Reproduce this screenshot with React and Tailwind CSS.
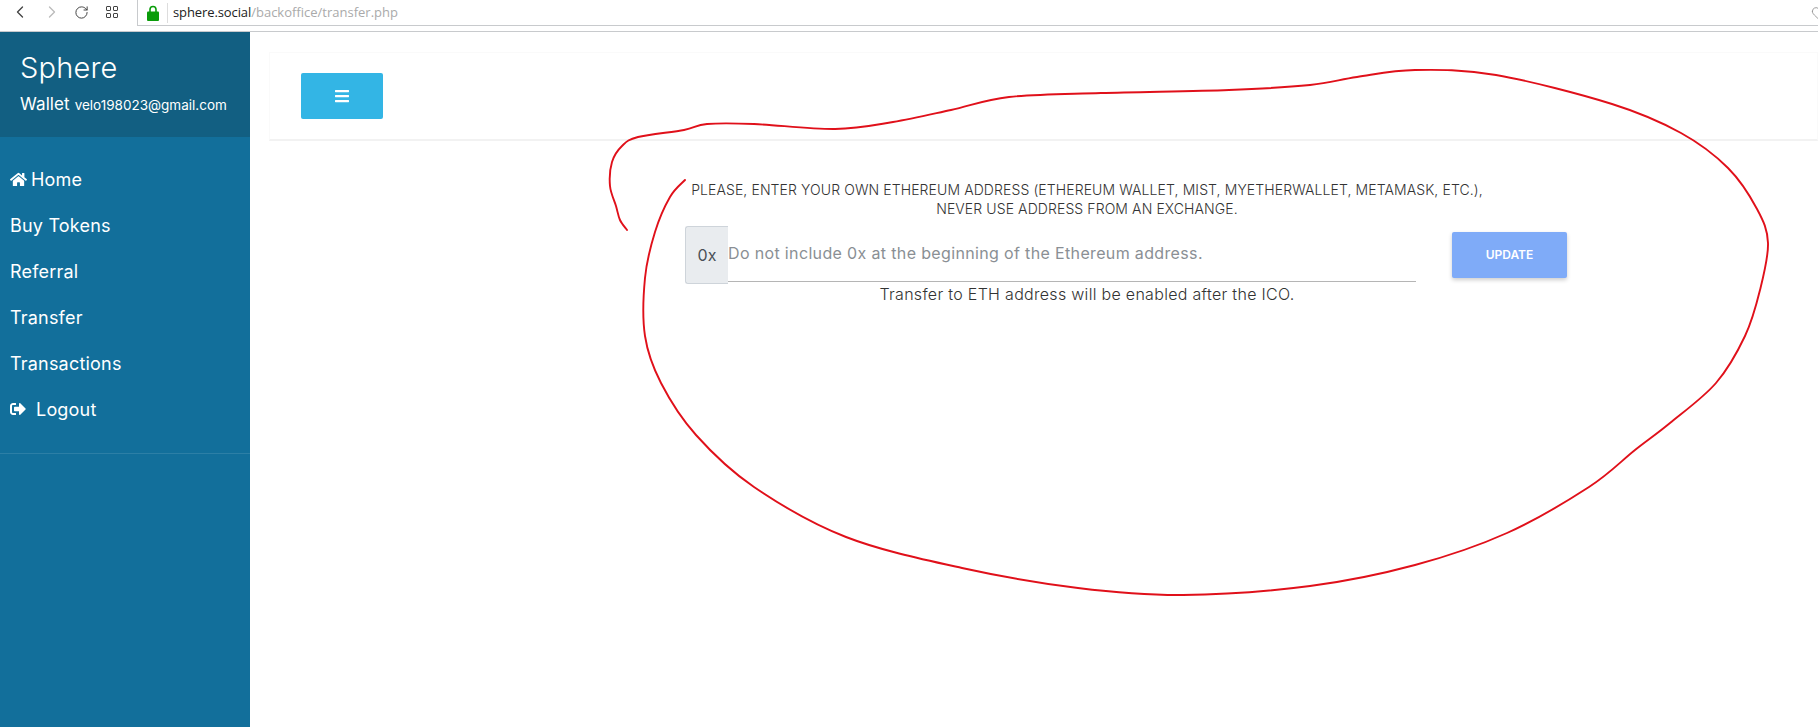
import { ChevronLeft, ChevronRight, RotateCw, Heart } from 'lucide-react'
import { FaHome, FaSignOutAlt, FaBars } from 'react-icons/fa'

const scribble = [
  [627, 230], [620, 220], [616, 206], [610, 186], [612, 162], [622, 146], [638, 137], [684, 130], [707, 124],
  [754, 124], [835, 129], [893, 122], [951, 110], [1009, 97], [1101, 93], [1229, 90], [1310, 85], [1357, 77],
  [1415, 70], [1496, 75], [1612, 104], [1681, 133], [1728, 168], [1757, 209], [1768, 243], [1760, 290], [1745, 336],
  [1716, 383], [1670, 423], [1635, 450], [1589, 487], [1507, 533], [1415, 565], [1310, 586], [1183, 595], [1078, 588],
  [962, 568], [846, 537], [754, 487], [696, 435], [661, 383], [645, 336], [645, 278], [655, 232], [670, 197], [685, 180],
]

// catmull-rom through the hand-drawn points
const toPath = (pts) => {
  let d = `M${pts[0][0]} ${pts[0][1]}`
  for (let i = 0; i < pts.length - 1; i++) {
    const p0 = pts[i - 1] || pts[i]
    const p1 = pts[i]
    const p2 = pts[i + 1]
    const p3 = pts[i + 2] || p2
    d += ` C${p1[0] + (p2[0] - p0[0]) / 6} ${p1[1] + (p2[1] - p0[1]) / 6} ${p2[0] - (p3[0] - p1[0]) / 6} ${p2[1] - (p3[1] - p1[1]) / 6} ${p2[0]} ${p2[1]}`
  }
  return d
}

const navItems = ['Buy Tokens', 'Referral', 'Transfer', 'Transactions']

export default function App() {
  return (
    <div className="relative w-[1818px] h-[727px] overflow-hidden bg-white font-['Inter',sans-serif]">
      {/* Browser bar */}
      <div className="flex h-[32px] border-b border-[#c8cacd] bg-white">
        <div className="flex w-[137px] items-start pl-[10px] pt-[2px]">
          <ChevronLeft size={20} strokeWidth={1.6} className="text-[#444]" />
          <ChevronRight size={20} strokeWidth={1.6} className="ml-[12px] text-[#bbb]" />
          <RotateCw size={15} strokeWidth={1.6} className="ml-[12px] mt-[3px] text-[#444]" />
          <div className="ml-[17px] mt-[4px] grid grid-cols-2 gap-[2px]">
            <span className="h-[5px] w-[5px] rounded-[1px] border border-[#444]" />
            <span className="h-[5px] w-[5px] rounded-[1px] border border-[#444]" />
            <span className="h-[5px] w-[5px] rounded-[1px] border border-[#444]" />
            <span className="h-[5px] w-[5px] rounded-[1px] border border-[#444]" />
          </div>
        </div>
        <div className="flex h-[26px] flex-1 items-center border-b border-l border-[#c8cacd] pl-[9px]">
          <svg width="12" height="16" viewBox="0 0 12 16" fill="none">
            <path d="M3 7V4.5a3 3 0 0 1 6 0V7" stroke="#0a9c0a" strokeWidth="1.6" />
            <rect x="0" y="6.5" width="12" height="9.5" rx="1" fill="#0a9c0a" />
          </svg>
          <span className="ml-[8px] h-[20px] border-l border-[#ddd]" />
          <span className="ml-[5px] font-['Open_Sans',sans-serif] text-[13px] tracking-[-0.1px] text-[#222]">sphere.social</span>
          <span className="font-['Open_Sans',sans-serif] text-[13px] text-[#aaa]">/backoffice/transfer.php</span>
          <Heart size={16} strokeWidth={1.2} className="ml-auto mr-[-9px] text-[#888]" />
        </div>
      </div>

      <div className="flex h-[695px]">
        {/* Sidebar */}
        <aside className="w-[250px] shrink-0 bg-[#126f9b] text-white">
          <div className="h-[105px] bg-[#125f82] pl-[20px] pt-[17px]">
            <div className="text-[29px] font-light leading-[38px] tracking-[0.2px]">Sphere</div>
            <div className="mt-[7px] whitespace-nowrap text-[17px] leading-[20px] tracking-[0.1px]">
              Wallet <span className="text-[13.5px] tracking-normal">velo198023@gmail.com</span>
            </div>
          </div>
          <nav className="border-b border-[#2c7fa6] pb-[21px] pl-[10px] pt-[19px] text-[18px] tracking-[0.2px]">
            <a className="flex h-[46px] items-center gap-[4px]">
              <FaHome size={17} /> Home
            </a>
            {navItems.map(item => (
              <a key={item} className="flex h-[46px] items-center">{item}</a>
            ))}
            <a className="flex h-[46px] items-center gap-[10px]">
              <FaSignOutAlt size={16} /> Logout
            </a>
          </nav>
        </aside>

        {/* Main */}
        <main className="flex-1 pl-[19px] pt-[20px]">
          <div className="flex h-[89px] items-center border border-[#fafafa] border-b-2 border-b-[#f2f2f2] pl-[31px]">
            <button className="flex h-[46px] w-[82px] items-center justify-center rounded-[2px] bg-[#33b5e5] text-white">
              <FaBars size={16} />
            </button>
          </div>

          <div className="ml-[416px] mt-[39px] w-[890px]">
            <p className="w-[804px] whitespace-nowrap text-center text-[14px] font-light leading-[19px] tracking-[0.1px] text-[#333]">
              PLEASE, ENTER YOUR OWN ETHEREUM ADDRESS (ETHEREUM WALLET, MIST, MYETHERWALLET, METAMASK, ETC.),
              <br />
              NEVER USE ADDRESS FROM AN EXCHANGE.
            </p>
            <div className="mt-[8px] flex items-start">
              <div className="flex h-[58px] w-[43px] shrink-0 items-center justify-center rounded-l-[3px] border border-[#ced4da] border-r-0 bg-[#e9ecef] text-[16px] text-[#495057]">
                0x
              </div>
              <div className="flex h-[56px] w-[688px] items-center whitespace-nowrap border-b border-[#b5b5b5] pb-[2px] text-[16px] tracking-[0.35px] text-[#8a8f94]">
                Do not include 0x at the beginning of the Ethereum address.
              </div>
              <button className="ml-[36px] mt-[6px] h-[46px] w-[115px] rounded-[2px] bg-[#7fabf8] text-[12px] font-semibold text-white shadow-[0_2px_4px_rgba(0,0,0,0.2)]">
                UPDATE
              </button>
            </div>
            <p className="mt-[-1px] w-[804px] whitespace-nowrap text-center text-[16px] font-light leading-[22px] tracking-[0.3px] text-[#333]">
              Transfer to ETH address will be enabled after the ICO.
            </p>
          </div>
        </main>
      </div>

      {/* Red pen annotation on top of the screenshot */}
      <svg className="pointer-events-none absolute left-0 top-0" width="1818" height="727" viewBox="0 0 1818 727" fill="none">
        <path d={toPath(scribble)} stroke="#e0101a" strokeWidth="1.9" strokeLinecap="round" strokeLinejoin="round" />
      </svg>
    </div>
  )
}
